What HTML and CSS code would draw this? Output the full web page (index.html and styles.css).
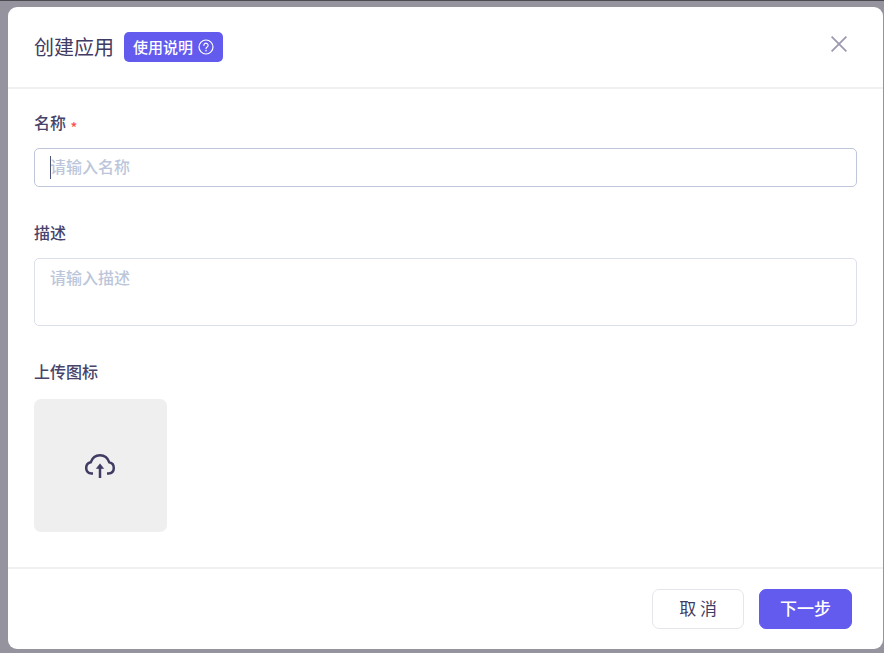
FILE: index.html
```html
<!DOCTYPE html>
<html lang="zh-CN">

<head>
    <meta charset="UTF-8">
    <meta name="viewport" content="width=device-width, initial-scale=1.0">
    <title>创建应用</title>
    <link rel="stylesheet" href="styles.css">
</head>

<body>
    <form class="modal" role="dialog" aria-labelledby="modalTitle">
        <header class="modal-header">
            <h1 class="title" id="modalTitle">创建应用</h1>
            <button type="button" class="help-button">
                <span>使用说明</span>
                <svg width="16" height="16" viewBox="0 0 16 16" fill="none" stroke="currentColor" stroke-linecap="round">
                    <circle cx="8" cy="8" r="7" stroke-width="1.2" />
                    <path d="M5.9 6.3a2.1 2.1 0 1 1 3.3 1.7c-.8.5-1.2.9-1.2 1.7" stroke-width="1.2" />
                    <circle cx="8" cy="11.8" r=".8" fill="currentColor" stroke="none" />
                </svg>
            </button>
            <button type="button" class="close-button" aria-label="关闭">
                <svg width="16" height="16" viewBox="0 0 16 16" fill="none" stroke="currentColor" stroke-width="1.8">
                    <path d="M.6.6l14.8 14.8M15.4.6L.6 15.4" />
                </svg>
            </button>
        </header>

        <div class="modal-body">
            <div class="field">
                <label class="label" for="appName">名称 <span class="required">*</span></label>
                <div class="input-wrap">
                    <input type="text" class="control active" id="appName" placeholder="请输入名称" required>
                    <span class="caret"></span>
                </div>
            </div>
            <div class="field">
                <label class="label" for="appDesc">描述</label>
                <textarea class="control textarea" id="appDesc" placeholder="请输入描述"></textarea>
            </div>
            <div class="field">
                <label class="label" for="appIcon">上传图标</label>
                <button type="button" class="upload" id="appIcon">
                    <svg width="31" height="26" viewBox="1 0 31 26" fill="none" stroke="currentColor" stroke-width="2.5">
                        <path d="M9 20.4H7.6C4.2 20.2 2.2 17.9 2.2 14.900c0-3 1.800-5.100 4.600-5.700C8.200 5 11.700 2.200 16 2.200s7.800 2.800 9.200 7C28 9.800 29.800 11.900 29.800 14.900c0 3-2 5.300-5.400 5.500H23" />
                        <path d="M16 25V13" />
                        <path d="M16 10.800l3.600 4.700h-7.200z" fill="currentColor" stroke-width=".6" stroke-linejoin="round" />
                    </svg>
                </button>
            </div>
        </div>

        <footer class="modal-footer">
            <button type="button" class="button">取 消</button>
            <button type="submit" class="button primary">下一步</button>
        </footer>
    </form>
</body>

</html>
```
FILE: styles.css
```css
* {
    box-sizing: border-box;
}

body {
    margin: 0;
    padding: 6px 1px 4px 8px;
    min-height: 100vh;
    display: flex;
    background-color: #95949e;
    border-top: 1px solid #4b4a50;
    color: #3f3b63;
    font-family: "Noto Sans CJK SC", sans-serif;
    font-size: 16px;
    line-height: 24px;
}

button,
input,
textarea {
    font: inherit;
    color: inherit;
}

button {
    cursor: pointer;
}

.modal {
    flex: 1;
    display: flex;
    flex-direction: column;
    background-color: #fff;
    border-radius: 9px;
}

.modal-header {
    display: flex;
    align-items: center;
    padding: 25px 36px 25px 26px;
    border-bottom: 2px solid #f0f0f2;
}

.title {
    margin: 0;
    font-size: 20px;
    font-weight: 400;
    line-height: 30px;
}

.help-button {
    display: flex;
    align-items: center;
    gap: 5px;
    height: 30px;
    margin-left: 10px;
    padding: 0 9px;
    border: none;
    border-radius: 5px;
    background-color: #635bee;
    color: #fff;
    font-size: 15px;
    font-weight: 500;
}

.close-button {
    display: flex;
    margin: 0 0 6px auto;
    padding: 0;
    border: none;
    background: none;
    color: #9c99b0;
}

.modal-body {
    flex: 1;
    padding: 21px 26px 34px;
}

.field + .field {
    margin-top: 33px;
}

.label {
    display: block;
    margin-bottom: 14px;
    color: #47436b;
    font-weight: 500;
}

.required {
    margin-left: 1px;
    color: #ff4d4f;
    font-size: 14px;
    line-height: 1;
    vertical-align: sub;
}

.input-wrap {
    position: relative;
}

.control {
    display: block;
    width: 100%;
    height: 39px;
    padding: 0 15px 4px;
    border: 1px solid #dbe0ea;
    border-radius: 5px;
    background-color: #fff;
    outline: none;
}

.control::placeholder {
    color: #bcc6da;
    opacity: 1;
    font-weight: 500;
}

.control.active {
    border-color: #bfc6d9;
}

.textarea {
    height: 68px;
    padding-top: 6px;
    resize: none;
}

.caret {
    position: absolute;
    top: 8px;
    left: 16px;
    width: 1px;
    height: 23px;
    background-color: #4a5578;
}

.upload {
    display: flex;
    align-items: center;
    justify-content: center;
    width: 133px;
    height: 133px;
    margin-top: 16px;
    padding: 0;
    border: none;
    border-radius: 7px;
    background-color: #efefef;
}

.modal-footer {
    display: flex;
    justify-content: flex-end;
    gap: 15px;
    padding: 20px 31px;
    border-top: 2px solid #f0f0f2;
}

.button {
    height: 40px;
    padding: 0 26px 2px;
    border: 1px solid #e6e5ec;
    border-radius: 7px;
    background-color: #fff;
    font-size: 17px;
}

.button.primary {
    padding: 0 20px 2px;
    border-color: #635bee;
    background-color: #635bee;
    color: #fff;
    font-weight: 500;
}
```
